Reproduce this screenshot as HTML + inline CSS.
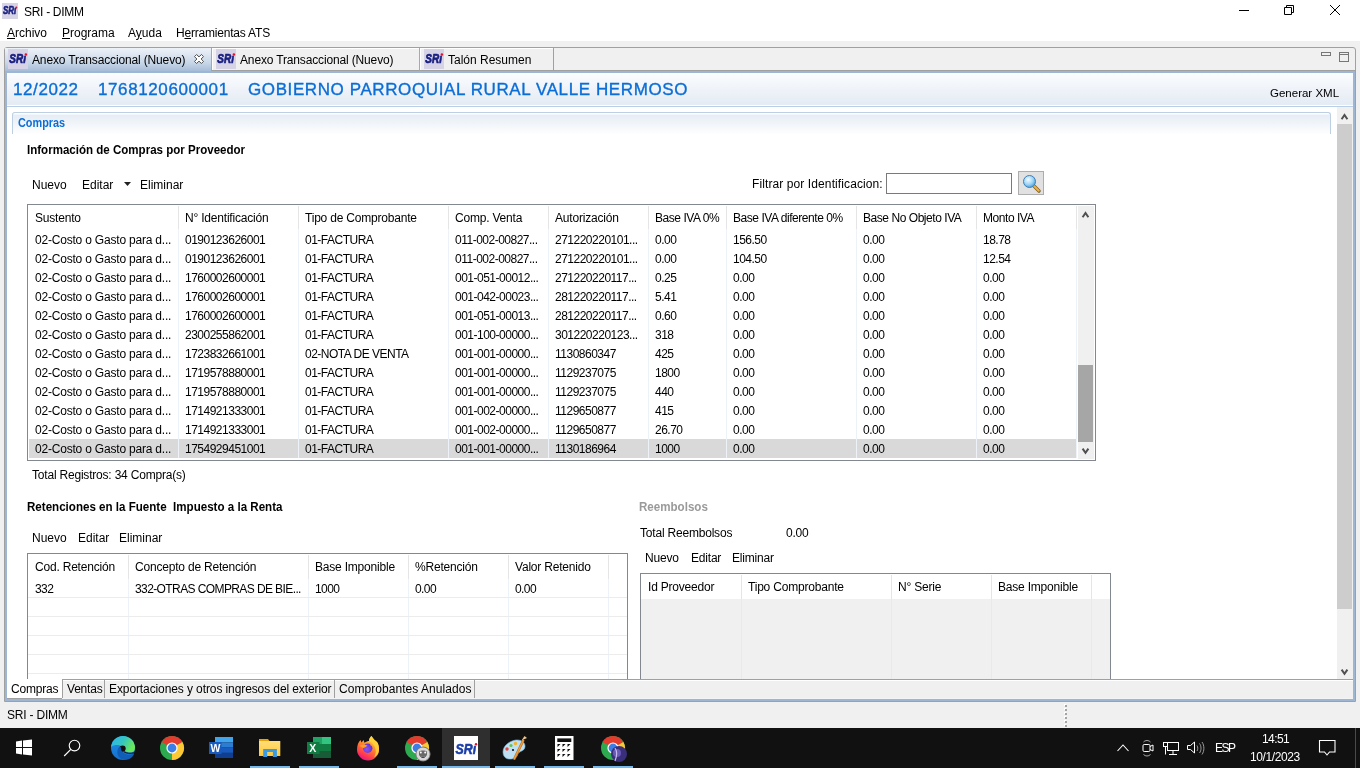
<!DOCTYPE html>
<html><head><meta charset="utf-8">
<style>
*{box-sizing:border-box;margin:0;padding:0}
html,body{width:1360px;height:768px;overflow:hidden;background:#f0f0f0;font-family:"Liberation Sans",sans-serif;font-size:12px;color:#000}
.a{position:absolute}
.t{position:absolute;white-space:nowrap;line-height:15px;font-size:12px}
.s{font-size:12px;letter-spacing:-0.2px}
.b{font-weight:bold}
</style></head><body>
<div class="a" style="left:0;top:0;width:1360px;height:768px;will-change:transform;overflow:hidden">

<div class="a" style="left:0px;top:0px;width:1360px;height:41px;background:#fff"></div>
<svg class="a" style="left:2px;top:3px" width="16" height="16" viewBox="0 0 20 20"><rect width="20" height="20" fill="#d6d3e6"/><text x="1.3" y="13.5" font-family="Liberation Sans" font-weight="bold" font-style="italic" font-size="12.6" fill="#1a2080" stroke="#1a2080" stroke-width="0.7" textLength="16.6" lengthAdjust="spacingAndGlyphs">SRı</text><circle cx="17.9" cy="5.5" r="1.25" fill="#e8102a"/></svg>
<div class="t" style="left:24px;top:5px;letter-spacing:-0.3px">SRI - DIMM</div>
<div class="t" style="left:7px;top:26px;"><u>A</u>rchivo</div>
<div class="t" style="left:62px;top:26px;"><u>P</u>rograma</div>
<div class="t" style="left:128px;top:26px;">A<u>y</u>uda</div>
<div class="t" style="left:176px;top:26px;letter-spacing:-0.2px">H<u>e</u>rramientas ATS</div>
<svg class="a" style="left:1230px;top:0" width="130" height="22"><path d="M9 10.5h10" stroke="#000" stroke-width="1"/><path d="M54.5 7.5h7v7h-7z M56.5 7.5v-2h7v7h-2" fill="none" stroke="#000" stroke-width="1"/><path d="M100 5l10 10M110 5l-10 10" stroke="#000" stroke-width="1"/></svg>
<div class="a" style="left:4px;top:47px;width:1352px;height:655px;border:1px solid #a0a0a0;border-radius:3px 3px 0 0;background:#f0f0f0"></div>
<div class="a" style="left:5px;top:48px;width:206px;height:25px;background:linear-gradient(#eef2f8,#c7d6e8 60%,#9db6d3)"></div>
<svg class="a" style="left:8px;top:49px" width="20" height="20" viewBox="0 0 20 20"><rect width="20" height="20" fill="#d6d3e6"/><text x="1.3" y="13.5" font-family="Liberation Sans" font-weight="bold" font-style="italic" font-size="12.6" fill="#1a2080" stroke="#1a2080" stroke-width="0.7" textLength="16.6" lengthAdjust="spacingAndGlyphs">SRı</text><circle cx="17.9" cy="5.5" r="1.25" fill="#e8102a"/></svg>
<div class="t" style="left:32px;top:53px;letter-spacing:-0.15px">Anexo Transaccional (Nuevo)</div>
<svg class="a" style="left:194px;top:54px" width="10" height="10" viewBox="0 0 10 10"><path d="M0.5 2.6L2.6 0.5 5 2.9 7.4 0.5 9.5 2.6 7.1 5 9.5 7.4 7.4 9.5 5 7.1 2.6 9.5 0.5 7.4 2.9 5z" fill="#fff" stroke="#4d4d4d" stroke-width="1"/></svg>
<div class="a" style="left:211px;top:48px;width:208px;height:23px;border-left:1px solid #a8a8a8;border-bottom:1px solid #a0a0a0;background:#f0f0f0;box-shadow:inset 1px 1px 0 #fff"></div>
<svg class="a" style="left:216px;top:49px" width="20" height="20" viewBox="0 0 20 20"><rect width="20" height="20" fill="#d6d3e6"/><text x="1.3" y="13.5" font-family="Liberation Sans" font-weight="bold" font-style="italic" font-size="12.6" fill="#1a2080" stroke="#1a2080" stroke-width="0.7" textLength="16.6" lengthAdjust="spacingAndGlyphs">SRı</text><circle cx="17.9" cy="5.5" r="1.25" fill="#e8102a"/></svg>
<div class="t" style="left:240px;top:53px;letter-spacing:-0.15px">Anexo Transaccional (Nuevo)</div>
<div class="a" style="left:419px;top:48px;width:135px;height:23px;border-left:1px solid #a8a8a8;border-right:1px solid #a0a0a0;border-bottom:1px solid #a0a0a0;background:#f0f0f0;box-shadow:inset 1px 1px 0 #fff"></div>
<svg class="a" style="left:424px;top:49px" width="20" height="20" viewBox="0 0 20 20"><rect width="20" height="20" fill="#d6d3e6"/><text x="1.3" y="13.5" font-family="Liberation Sans" font-weight="bold" font-style="italic" font-size="12.6" fill="#1a2080" stroke="#1a2080" stroke-width="0.7" textLength="16.6" lengthAdjust="spacingAndGlyphs">SRı</text><circle cx="17.9" cy="5.5" r="1.25" fill="#e8102a"/></svg>
<div class="t" style="left:448px;top:53px;">Talón Resumen</div>
<div class="a" style="left:554px;top:70px;width:801px;height:1px;background:#a0a0a0"></div>
<svg class="a" style="left:1318px;top:49px" width="36" height="16"><rect x="3.5" y="3.5" width="9" height="3" fill="none" stroke="#777"/><rect x="21.5" y="3.5" width="9" height="9" fill="none" stroke="#777"/><path d="M21.5 5.5h9" stroke="#777"/></svg>
<div class="a" style="left:5px;top:71px;width:1350px;height:630px;border:2px solid #9db6d3;background:#fff"></div>
<div class="a" style="left:7px;top:73px;width:1346px;height:32px;background:linear-gradient(#fbfcfe,#e4ebf4)"></div>
<div class="a" style="left:7px;top:105px;width:1346px;height:1px;background:#fff"></div>
<div class="a" style="left:7px;top:106px;width:1346px;height:1px;background:#b9cfe6"></div>
<div class="t" style="left:13px;top:80px;font-size:17px;line-height:20px;color:#0a6ed6;letter-spacing:0.6px;-webkit-text-stroke:0.35px #0a6ed6">12/2022</div>
<div class="t" style="left:98px;top:80px;font-size:17px;line-height:20px;color:#0a6ed6;letter-spacing:0.6px;-webkit-text-stroke:0.35px #0a6ed6">1768120600001</div>
<div class="t" style="left:248px;top:80px;font-size:17px;line-height:20px;color:#0a6ed6;letter-spacing:0.6px;-webkit-text-stroke:0.35px #0a6ed6">GOBIERNO PARROQUIAL RURAL VALLE HERMOSO</div>
<div class="t" style="left:1270px;top:86px;font-size:11.5px">Generar XML</div>
<div class="a" style="left:12px;top:112px;width:1319px;height:22px;border:1px solid #bccfe3;border-bottom:none;border-radius:3px 3px 0 0;background:linear-gradient(#fff 0,#fff 1px,#e6edf5 2px,#fff 22px)"></div>
<div class="t b" style="left:18px;top:116px;color:#0a6ed6;transform:scaleX(0.905);transform-origin:0 0">Compras</div>
<div class="t b" style="left:27px;top:143px;transform:scaleX(0.962);transform-origin:0 0">Información de Compras por Proveedor</div>
<div class="t" style="left:32px;top:178px;">Nuevo</div>
<div class="t" style="left:82px;top:178px;">Editar</div>
<svg class="a" style="left:124px;top:182px" width="8" height="5"><path d="M0 0h7l-3.5 4z" fill="#222"/></svg>
<div class="t" style="left:140px;top:178px;">Eliminar</div>
<div class="t" style="left:752px;top:177px;letter-spacing:0.1px">Filtrar por Identificacion:</div>
<div class="a" style="left:886px;top:173px;width:126px;height:21px;border:1px solid #7a7a7a;background:#fff"></div>
<div class="a" style="left:1018px;top:171px;width:26px;height:24px;border:1px solid #adadad;background:#e1e1e1"></div>
<svg class="a" style="left:1022px;top:174px" width="20" height="20" viewBox="0 0 20 20"><defs><radialGradient id="lg" cx="40%" cy="35%" r="65%"><stop offset="0" stop-color="#f4fbff"/><stop offset="0.6" stop-color="#9fd6f7"/><stop offset="1" stop-color="#4fa3db"/></radialGradient></defs><path d="M11.5 11.5l5.5 5.5" stroke="#7a5a20" stroke-width="3.4" stroke-linecap="round"/><path d="M11.8 11.8l5 5" stroke="#f0b040" stroke-width="2" stroke-linecap="round"/><circle cx="7.5" cy="7.5" r="6" fill="url(#lg)" stroke="#3d7fb8" stroke-width="1"/></svg>
<div class="a" style="left:27px;top:204px;width:1069px;height:257px;border:1px solid #828790;background:#fff"></div>
<div class="a" style="left:29px;top:439px;width:1047px;height:19px;background:#d9d9d9"></div>
<div class="a" style="left:178px;top:206px;width:1px;height:23px;background:#e5e5e5"></div>
<div class="a" style="left:178px;top:229px;width:1px;height:229px;background:#edf2f9"></div>
<div class="a" style="left:298px;top:206px;width:1px;height:23px;background:#e5e5e5"></div>
<div class="a" style="left:298px;top:229px;width:1px;height:229px;background:#edf2f9"></div>
<div class="a" style="left:448px;top:206px;width:1px;height:23px;background:#e5e5e5"></div>
<div class="a" style="left:448px;top:229px;width:1px;height:229px;background:#edf2f9"></div>
<div class="a" style="left:548px;top:206px;width:1px;height:23px;background:#e5e5e5"></div>
<div class="a" style="left:548px;top:229px;width:1px;height:229px;background:#edf2f9"></div>
<div class="a" style="left:648px;top:206px;width:1px;height:23px;background:#e5e5e5"></div>
<div class="a" style="left:648px;top:229px;width:1px;height:229px;background:#edf2f9"></div>
<div class="a" style="left:726px;top:206px;width:1px;height:23px;background:#e5e5e5"></div>
<div class="a" style="left:726px;top:229px;width:1px;height:229px;background:#edf2f9"></div>
<div class="a" style="left:856px;top:206px;width:1px;height:23px;background:#e5e5e5"></div>
<div class="a" style="left:856px;top:229px;width:1px;height:229px;background:#edf2f9"></div>
<div class="a" style="left:976px;top:206px;width:1px;height:23px;background:#e5e5e5"></div>
<div class="a" style="left:976px;top:229px;width:1px;height:229px;background:#edf2f9"></div>
<div class="a" style="left:1076px;top:206px;width:1px;height:23px;background:#e5e5e5"></div>
<div class="a" style="left:1076px;top:229px;width:1px;height:229px;background:#edf2f9"></div>
<div class="t s" style="left:35px;top:211px;">Sustento</div>
<div class="t s" style="left:185px;top:211px;">N° Identificación</div>
<div class="t s" style="left:305px;top:211px;">Tipo de Comprobante</div>
<div class="t s" style="left:455px;top:211px;">Comp. Venta</div>
<div class="t s" style="left:555px;top:211px;">Autorización</div>
<div class="t s" style="left:655px;top:211px;letter-spacing:-0.45px">Base IVA 0%</div>
<div class="t s" style="left:733px;top:211px;letter-spacing:-0.45px">Base IVA diferente 0%</div>
<div class="t s" style="left:863px;top:211px;letter-spacing:-0.45px">Base No Objeto IVA</div>
<div class="t s" style="left:983px;top:211px;letter-spacing:-0.45px">Monto IVA</div>
<div class="t s" style="left:35px;top:233px;">02-Costo o Gasto para d...</div>
<div class="t s" style="left:185px;top:233px;letter-spacing:-0.5px">0190123626001</div>
<div class="t s" style="left:305px;top:233px;letter-spacing:-0.5px">01-FACTURA</div>
<div class="t s" style="left:455px;top:233px;letter-spacing:-0.5px">011-002-00827...</div>
<div class="t s" style="left:555px;top:233px;letter-spacing:-0.5px">271220220101...</div>
<div class="t s" style="left:655px;top:233px;letter-spacing:-0.5px">0.00</div>
<div class="t s" style="left:733px;top:233px;letter-spacing:-0.5px">156.50</div>
<div class="t s" style="left:863px;top:233px;letter-spacing:-0.5px">0.00</div>
<div class="t s" style="left:983px;top:233px;letter-spacing:-0.5px">18.78</div>
<div class="t s" style="left:35px;top:252px;">02-Costo o Gasto para d...</div>
<div class="t s" style="left:185px;top:252px;letter-spacing:-0.5px">0190123626001</div>
<div class="t s" style="left:305px;top:252px;letter-spacing:-0.5px">01-FACTURA</div>
<div class="t s" style="left:455px;top:252px;letter-spacing:-0.5px">011-002-00827...</div>
<div class="t s" style="left:555px;top:252px;letter-spacing:-0.5px">271220220101...</div>
<div class="t s" style="left:655px;top:252px;letter-spacing:-0.5px">0.00</div>
<div class="t s" style="left:733px;top:252px;letter-spacing:-0.5px">104.50</div>
<div class="t s" style="left:863px;top:252px;letter-spacing:-0.5px">0.00</div>
<div class="t s" style="left:983px;top:252px;letter-spacing:-0.5px">12.54</div>
<div class="t s" style="left:35px;top:271px;">02-Costo o Gasto para d...</div>
<div class="t s" style="left:185px;top:271px;letter-spacing:-0.5px">1760002600001</div>
<div class="t s" style="left:305px;top:271px;letter-spacing:-0.5px">01-FACTURA</div>
<div class="t s" style="left:455px;top:271px;letter-spacing:-0.5px">001-051-00012...</div>
<div class="t s" style="left:555px;top:271px;letter-spacing:-0.5px">271220220117...</div>
<div class="t s" style="left:655px;top:271px;letter-spacing:-0.5px">0.25</div>
<div class="t s" style="left:733px;top:271px;letter-spacing:-0.5px">0.00</div>
<div class="t s" style="left:863px;top:271px;letter-spacing:-0.5px">0.00</div>
<div class="t s" style="left:983px;top:271px;letter-spacing:-0.5px">0.00</div>
<div class="t s" style="left:35px;top:290px;">02-Costo o Gasto para d...</div>
<div class="t s" style="left:185px;top:290px;letter-spacing:-0.5px">1760002600001</div>
<div class="t s" style="left:305px;top:290px;letter-spacing:-0.5px">01-FACTURA</div>
<div class="t s" style="left:455px;top:290px;letter-spacing:-0.5px">001-042-00023...</div>
<div class="t s" style="left:555px;top:290px;letter-spacing:-0.5px">281220220117...</div>
<div class="t s" style="left:655px;top:290px;letter-spacing:-0.5px">5.41</div>
<div class="t s" style="left:733px;top:290px;letter-spacing:-0.5px">0.00</div>
<div class="t s" style="left:863px;top:290px;letter-spacing:-0.5px">0.00</div>
<div class="t s" style="left:983px;top:290px;letter-spacing:-0.5px">0.00</div>
<div class="t s" style="left:35px;top:309px;">02-Costo o Gasto para d...</div>
<div class="t s" style="left:185px;top:309px;letter-spacing:-0.5px">1760002600001</div>
<div class="t s" style="left:305px;top:309px;letter-spacing:-0.5px">01-FACTURA</div>
<div class="t s" style="left:455px;top:309px;letter-spacing:-0.5px">001-051-00013...</div>
<div class="t s" style="left:555px;top:309px;letter-spacing:-0.5px">281220220117...</div>
<div class="t s" style="left:655px;top:309px;letter-spacing:-0.5px">0.60</div>
<div class="t s" style="left:733px;top:309px;letter-spacing:-0.5px">0.00</div>
<div class="t s" style="left:863px;top:309px;letter-spacing:-0.5px">0.00</div>
<div class="t s" style="left:983px;top:309px;letter-spacing:-0.5px">0.00</div>
<div class="t s" style="left:35px;top:328px;">02-Costo o Gasto para d...</div>
<div class="t s" style="left:185px;top:328px;letter-spacing:-0.5px">2300255862001</div>
<div class="t s" style="left:305px;top:328px;letter-spacing:-0.5px">01-FACTURA</div>
<div class="t s" style="left:455px;top:328px;letter-spacing:-0.5px">001-100-00000...</div>
<div class="t s" style="left:555px;top:328px;letter-spacing:-0.5px">301220220123...</div>
<div class="t s" style="left:655px;top:328px;letter-spacing:-0.5px">318</div>
<div class="t s" style="left:733px;top:328px;letter-spacing:-0.5px">0.00</div>
<div class="t s" style="left:863px;top:328px;letter-spacing:-0.5px">0.00</div>
<div class="t s" style="left:983px;top:328px;letter-spacing:-0.5px">0.00</div>
<div class="t s" style="left:35px;top:347px;">02-Costo o Gasto para d...</div>
<div class="t s" style="left:185px;top:347px;letter-spacing:-0.5px">1723832661001</div>
<div class="t s" style="left:305px;top:347px;letter-spacing:-0.5px">02-NOTA DE VENTA</div>
<div class="t s" style="left:455px;top:347px;letter-spacing:-0.5px">001-001-00000...</div>
<div class="t s" style="left:555px;top:347px;letter-spacing:-0.5px">1130860347</div>
<div class="t s" style="left:655px;top:347px;letter-spacing:-0.5px">425</div>
<div class="t s" style="left:733px;top:347px;letter-spacing:-0.5px">0.00</div>
<div class="t s" style="left:863px;top:347px;letter-spacing:-0.5px">0.00</div>
<div class="t s" style="left:983px;top:347px;letter-spacing:-0.5px">0.00</div>
<div class="t s" style="left:35px;top:366px;">02-Costo o Gasto para d...</div>
<div class="t s" style="left:185px;top:366px;letter-spacing:-0.5px">1719578880001</div>
<div class="t s" style="left:305px;top:366px;letter-spacing:-0.5px">01-FACTURA</div>
<div class="t s" style="left:455px;top:366px;letter-spacing:-0.5px">001-001-00000...</div>
<div class="t s" style="left:555px;top:366px;letter-spacing:-0.5px">1129237075</div>
<div class="t s" style="left:655px;top:366px;letter-spacing:-0.5px">1800</div>
<div class="t s" style="left:733px;top:366px;letter-spacing:-0.5px">0.00</div>
<div class="t s" style="left:863px;top:366px;letter-spacing:-0.5px">0.00</div>
<div class="t s" style="left:983px;top:366px;letter-spacing:-0.5px">0.00</div>
<div class="t s" style="left:35px;top:385px;">02-Costo o Gasto para d...</div>
<div class="t s" style="left:185px;top:385px;letter-spacing:-0.5px">1719578880001</div>
<div class="t s" style="left:305px;top:385px;letter-spacing:-0.5px">01-FACTURA</div>
<div class="t s" style="left:455px;top:385px;letter-spacing:-0.5px">001-001-00000...</div>
<div class="t s" style="left:555px;top:385px;letter-spacing:-0.5px">1129237075</div>
<div class="t s" style="left:655px;top:385px;letter-spacing:-0.5px">440</div>
<div class="t s" style="left:733px;top:385px;letter-spacing:-0.5px">0.00</div>
<div class="t s" style="left:863px;top:385px;letter-spacing:-0.5px">0.00</div>
<div class="t s" style="left:983px;top:385px;letter-spacing:-0.5px">0.00</div>
<div class="t s" style="left:35px;top:404px;">02-Costo o Gasto para d...</div>
<div class="t s" style="left:185px;top:404px;letter-spacing:-0.5px">1714921333001</div>
<div class="t s" style="left:305px;top:404px;letter-spacing:-0.5px">01-FACTURA</div>
<div class="t s" style="left:455px;top:404px;letter-spacing:-0.5px">001-002-00000...</div>
<div class="t s" style="left:555px;top:404px;letter-spacing:-0.5px">1129650877</div>
<div class="t s" style="left:655px;top:404px;letter-spacing:-0.5px">415</div>
<div class="t s" style="left:733px;top:404px;letter-spacing:-0.5px">0.00</div>
<div class="t s" style="left:863px;top:404px;letter-spacing:-0.5px">0.00</div>
<div class="t s" style="left:983px;top:404px;letter-spacing:-0.5px">0.00</div>
<div class="t s" style="left:35px;top:423px;">02-Costo o Gasto para d...</div>
<div class="t s" style="left:185px;top:423px;letter-spacing:-0.5px">1714921333001</div>
<div class="t s" style="left:305px;top:423px;letter-spacing:-0.5px">01-FACTURA</div>
<div class="t s" style="left:455px;top:423px;letter-spacing:-0.5px">001-002-00000...</div>
<div class="t s" style="left:555px;top:423px;letter-spacing:-0.5px">1129650877</div>
<div class="t s" style="left:655px;top:423px;letter-spacing:-0.5px">26.70</div>
<div class="t s" style="left:733px;top:423px;letter-spacing:-0.5px">0.00</div>
<div class="t s" style="left:863px;top:423px;letter-spacing:-0.5px">0.00</div>
<div class="t s" style="left:983px;top:423px;letter-spacing:-0.5px">0.00</div>
<div class="t s" style="left:35px;top:442px;">02-Costo o Gasto para d...</div>
<div class="t s" style="left:185px;top:442px;letter-spacing:-0.5px">1754929451001</div>
<div class="t s" style="left:305px;top:442px;letter-spacing:-0.5px">01-FACTURA</div>
<div class="t s" style="left:455px;top:442px;letter-spacing:-0.5px">001-001-00000...</div>
<div class="t s" style="left:555px;top:442px;letter-spacing:-0.5px">1130186964</div>
<div class="t s" style="left:655px;top:442px;letter-spacing:-0.5px">1000</div>
<div class="t s" style="left:733px;top:442px;letter-spacing:-0.5px">0.00</div>
<div class="t s" style="left:863px;top:442px;letter-spacing:-0.5px">0.00</div>
<div class="t s" style="left:983px;top:442px;letter-spacing:-0.5px">0.00</div>
<div class="a" style="left:1078px;top:206px;width:16px;height:253px;background:#f0f0f0"></div>
<div class="a" style="left:1078px;top:365px;width:15px;height:77px;background:#a6a6a6"></div>
<svg class="a" style="left:1080px;top:210px" width="10" height="10"><path d="M2.6 7.2L5.5 3 8.4 7.2" fill="none" stroke="#505050" stroke-width="2" stroke-linejoin="miter"/></svg>
<svg class="a" style="left:1080px;top:445px" width="10" height="10"><path d="M2.6 3.6L5.5 7.8 8.4 3.6" fill="none" stroke="#505050" stroke-width="2" stroke-linejoin="miter"/></svg>
<div class="t s" style="left:32px;top:468px;">Total Registros: 34 Compra(s)</div>
<div class="t b" style="left:27px;top:500px;transform:scaleX(0.965);transform-origin:0 0">Retenciones en la Fuente&nbsp; Impuesto a la Renta</div>
<div class="t" style="left:32px;top:531px;">Nuevo</div>
<div class="t" style="left:78px;top:531px;">Editar</div>
<div class="t" style="left:119px;top:531px;">Eliminar</div>
<div class="a" style="left:27px;top:553px;width:601px;height:130px;border:1px solid #828790;border-bottom:none;background:#fff"></div>
<div class="a" style="left:128px;top:555px;width:1px;height:24px;background:#e5e5e5"></div>
<div class="a" style="left:128px;top:579px;width:1px;height:100px;background:#edf2f9"></div>
<div class="a" style="left:308px;top:555px;width:1px;height:24px;background:#e5e5e5"></div>
<div class="a" style="left:308px;top:579px;width:1px;height:100px;background:#edf2f9"></div>
<div class="a" style="left:408px;top:555px;width:1px;height:24px;background:#e5e5e5"></div>
<div class="a" style="left:408px;top:579px;width:1px;height:100px;background:#edf2f9"></div>
<div class="a" style="left:508px;top:555px;width:1px;height:24px;background:#e5e5e5"></div>
<div class="a" style="left:508px;top:579px;width:1px;height:100px;background:#edf2f9"></div>
<div class="a" style="left:608px;top:555px;width:1px;height:24px;background:#e5e5e5"></div>
<div class="a" style="left:608px;top:579px;width:1px;height:100px;background:#edf2f9"></div>
<div class="a" style="left:28px;top:597px;width:599px;height:1px;background:#ececec"></div>
<div class="a" style="left:28px;top:616px;width:599px;height:1px;background:#ececec"></div>
<div class="a" style="left:28px;top:635px;width:599px;height:1px;background:#ececec"></div>
<div class="a" style="left:28px;top:654px;width:599px;height:1px;background:#ececec"></div>
<div class="a" style="left:28px;top:673px;width:599px;height:1px;background:#ececec"></div>
<div class="t s" style="left:35px;top:560px;">Cod. Retención</div>
<div class="t s" style="left:135px;top:560px;">Concepto de Retención</div>
<div class="t s" style="left:315px;top:560px;">Base Imponible</div>
<div class="t s" style="left:415px;top:560px;">%Retención</div>
<div class="t s" style="left:515px;top:560px;">Valor Retenido</div>
<div class="t s" style="left:35px;top:582px;letter-spacing:-0.6px">332</div>
<div class="t s" style="left:135px;top:582px;letter-spacing:-0.6px">332-OTRAS COMPRAS DE BIE...</div>
<div class="t s" style="left:315px;top:582px;letter-spacing:-0.6px">1000</div>
<div class="t s" style="left:415px;top:582px;letter-spacing:-0.6px">0.00</div>
<div class="t s" style="left:515px;top:582px;letter-spacing:-0.6px">0.00</div>
<div class="t b" style="left:639px;top:500px;color:#9a9a9a;transform:scaleX(0.965);transform-origin:0 0">Reembolsos</div>
<div class="t s" style="left:640px;top:526px;">Total Reembolsos</div>
<div class="t s" style="left:786px;top:526px;">0.00</div>
<div class="t s" style="left:645px;top:551px;">Nuevo</div>
<div class="t s" style="left:691px;top:551px;">Editar</div>
<div class="t s" style="left:732px;top:551px;">Eliminar</div>
<div class="a" style="left:640px;top:573px;width:471px;height:110px;border:1px solid #828790;border-bottom:none;background:#f0f0f0"></div>
<div class="a" style="left:641px;top:574px;width:469px;height:25px;background:#fff"></div>
<div class="a" style="left:741px;top:575px;width:1px;height:24px;background:#e5e5e5"></div>
<div class="a" style="left:741px;top:599px;width:1px;height:80px;background:#e3eaf3"></div>
<div class="a" style="left:891px;top:575px;width:1px;height:24px;background:#e5e5e5"></div>
<div class="a" style="left:891px;top:599px;width:1px;height:80px;background:#e3eaf3"></div>
<div class="a" style="left:991px;top:575px;width:1px;height:24px;background:#e5e5e5"></div>
<div class="a" style="left:991px;top:599px;width:1px;height:80px;background:#e3eaf3"></div>
<div class="a" style="left:1091px;top:575px;width:1px;height:24px;background:#e5e5e5"></div>
<div class="a" style="left:1091px;top:599px;width:1px;height:80px;background:#e3eaf3"></div>
<div class="t s" style="left:648px;top:580px;">Id Proveedor</div>
<div class="t s" style="left:748px;top:580px;">Tipo Comprobante</div>
<div class="t s" style="left:898px;top:580px;">N° Serie</div>
<div class="t s" style="left:998px;top:580px;">Base Imponible</div>
<div class="a" style="left:1337px;top:107px;width:16px;height:572px;background:#f0f0f0"></div>
<div class="a" style="left:1337px;top:124px;width:15px;height:485px;background:#cdcdcd"></div>
<svg class="a" style="left:1339px;top:111px" width="12" height="12"><path d="M2.6 8.2L5.5 4 8.4 8.2" fill="none" stroke="#505050" stroke-width="2" stroke-linejoin="miter"/></svg>
<svg class="a" style="left:1339px;top:665px" width="12" height="12"><path d="M2.6 4.6L5.5 8.8 8.4 4.6" fill="none" stroke="#505050" stroke-width="2" stroke-linejoin="miter"/></svg>
<div class="a" style="left:7px;top:679px;width:1346px;height:20px;background:#f0f0f0;border-top:1px solid #a0a0a0;box-shadow:inset 0 1px 0 #fff"></div>
<div class="a" style="left:7px;top:679px;width:56px;height:20px;background:#fff"></div>
<div class="a" style="left:7px;top:698px;width:1346px;height:1px;background:#f4f4f4"></div>
<div class="a" style="left:7px;top:698px;width:55px;height:1px;background:#a0a0a0"></div>
<div class="a" style="left:62px;top:679px;width:1px;height:19px;background:#a0a0a0"></div>
<div class="a" style="left:104px;top:679px;width:1px;height:19px;background:#a0a0a0"></div>
<div class="a" style="left:334px;top:679px;width:1px;height:19px;background:#a0a0a0"></div>
<div class="a" style="left:474px;top:679px;width:1px;height:19px;background:#a0a0a0"></div>
<div class="t s" style="left:11px;top:682px;">Compras</div>
<div class="t s" style="left:67px;top:682px;">Ventas</div>
<div class="t s" style="left:109px;top:682px;letter-spacing:-0.1px">Exportaciones y otros ingresos del exterior</div>
<div class="t s" style="left:339px;top:682px;letter-spacing:0.05px">Comprobantes Anulados</div>
<div class="t s" style="left:7px;top:708px;">SRI - DIMM</div>
<div class="a" style="left:1064px;top:704px;width:2px;height:2px;background:#fff"></div>
<div class="a" style="left:1065px;top:705px;width:2px;height:2px;background:#a4a4a4"></div>
<div class="a" style="left:1064px;top:708px;width:2px;height:2px;background:#fff"></div>
<div class="a" style="left:1065px;top:709px;width:2px;height:2px;background:#a4a4a4"></div>
<div class="a" style="left:1064px;top:712px;width:2px;height:2px;background:#fff"></div>
<div class="a" style="left:1065px;top:713px;width:2px;height:2px;background:#a4a4a4"></div>
<div class="a" style="left:1064px;top:716px;width:2px;height:2px;background:#fff"></div>
<div class="a" style="left:1065px;top:717px;width:2px;height:2px;background:#a4a4a4"></div>
<div class="a" style="left:1064px;top:720px;width:2px;height:2px;background:#fff"></div>
<div class="a" style="left:1065px;top:721px;width:2px;height:2px;background:#a4a4a4"></div>
<div class="a" style="left:1064px;top:724px;width:2px;height:2px;background:#fff"></div>
<div class="a" style="left:1065px;top:725px;width:2px;height:2px;background:#a4a4a4"></div>
<div class="a" style="left:0px;top:728px;width:1360px;height:40px;background:#111111"></div>
<div class="a" style="left:442px;top:728px;width:48px;height:40px;background:#2f2f2f"></div>
<div class="a" style="left:250px;top:766px;width:40px;height:2px;background:#76b9ed"></div>
<div class="a" style="left:299px;top:766px;width:40px;height:2px;background:#76b9ed"></div>
<div class="a" style="left:397px;top:766px;width:40px;height:2px;background:#76b9ed"></div>
<div class="a" style="left:442px;top:766px;width:48px;height:2px;background:#76b9ed"></div>
<div class="a" style="left:495px;top:766px;width:40px;height:2px;background:#76b9ed"></div>
<div class="a" style="left:544px;top:766px;width:40px;height:2px;background:#76b9ed"></div>
<div class="a" style="left:593px;top:766px;width:40px;height:2px;background:#76b9ed"></div>

<svg class="a" style="left:0;top:728px" width="660" height="40" viewBox="0 728 660 40">
 <!-- windows logo -->
 <path d="M16 741.4l6 -0.8v6.4h-6z M23 740.5l9 -1.1v7.6h-9z M16 748h6v6.4l-6 -0.8z M23 748h9v7.6l-9 -1.1z" fill="#fff"/>
 <!-- search -->
 <circle cx="74.5" cy="745.6" r="5.3" fill="none" stroke="#fff" stroke-width="1.1"/>
 <path d="M70.8 749.4l-6.6 6.6" stroke="#fff" stroke-width="1.2"/>
 <defs>
  <linearGradient id="eg1" x1="0" y1="0" x2="1" y2="0.4"><stop offset="0" stop-color="#2cb4f0"/><stop offset="0.55" stop-color="#35c6c0"/><stop offset="1" stop-color="#6ae85a"/></linearGradient>
  <linearGradient id="eg2" x1="0" y1="0" x2="0" y2="1"><stop offset="0" stop-color="#1f8fe6"/><stop offset="1" stop-color="#1570d0"/></linearGradient>
  <linearGradient id="ffg" x1="0" y1="0" x2="0" y2="1"><stop offset="0" stop-color="#ffd43a"/><stop offset="0.5" stop-color="#ff7a2a"/><stop offset="1" stop-color="#f0268a"/></linearGradient>
 </defs>
 <!-- edge -->
 <circle cx="123" cy="748" r="12" fill="url(#eg2)"/>
 <path d="M111 748 A12 12 0 0 1 135 748 C135 751 133 752.5 130 752.5 C127 752.5 124.5 751.5 124.5 749.5 C123 745.5 116 743 111 747 Z" fill="url(#eg1)"/>
 <circle cx="122.6" cy="748.6" r="3.1" fill="#111"/>
 <path d="M119.5 746.5 C115.5 751 117 758.5 124 759.6 C129 760.2 133 757.5 134.2 753.5 C131 755.2 127 755.3 124.5 753.6 C122 752 120.5 750 121 747.5 Z" fill="#0f5db4"/>
 <path d="M124 751.8 C126 753.4 130.5 753.8 134 752.8" stroke="#111" stroke-width="1" fill="none"/>
 <!-- chrome -->
 <g id="chr">
 <circle cx="172" cy="748" r="12" fill="#2da94f"/>
 <path d="M172 748 L161.6 742 A12 12 0 0 1 182.4 742 Z" fill="#e33b2e"/>
 <path d="M172 748 L182.4 742 A12 12 0 0 1 172 760 Z" fill="#fcc934"/>
 <circle cx="172" cy="748" r="5.6" fill="#fff"/>
 <circle cx="172" cy="748" r="4.4" fill="#3b7ee8"/>
 </g>
 <!-- word -->
 <rect x="215" y="737" width="18" height="5.3" fill="#41a5ee"/>
 <rect x="215" y="742.3" width="18" height="5.3" fill="#2b7cd3"/>
 <rect x="215" y="747.6" width="18" height="5.3" fill="#185abd"/>
 <rect x="215" y="752.9" width="18" height="5.1" fill="#103f91"/>
 <rect x="209" y="742" width="12.5" height="12" fill="#185abd"/>
 <text x="210.4" y="752.3" font-family="Liberation Sans" font-weight="bold" font-size="10.5" fill="#fff">W</text>
 <!-- explorer -->
 <defs><linearGradient id="fdg" x1="0" y1="0" x2="0" y2="1"><stop offset="0" stop-color="#ffdf78"/><stop offset="1" stop-color="#ffc83c"/></linearGradient></defs>
 <path d="M259 739h9l1.5 2h-10.5z" fill="#e9a20a"/>
 <rect x="259" y="741" width="21.3" height="15" fill="url(#fdg)"/>
 <path d="M263.2 757v-8.1h13.7v8.1h-4v-4.9h-5.7v4.9z" fill="#3a9be2"/>
 <!-- excel -->
 <rect x="313" y="737" width="18" height="21" fill="#21a366"/>
 <rect x="322" y="737" width="9" height="7" fill="#33c481"/>
 <rect x="313" y="744" width="18" height="7" fill="#107c41"/>
 <rect x="313" y="751" width="18" height="7" fill="#185c37"/>
 <rect x="307" y="742" width="12.5" height="12" fill="#107c41"/>
 <text x="309.3" y="752.3" font-family="Liberation Sans" font-weight="bold" font-size="10.5" fill="#fff">X</text>
 <!-- firefox -->
 <defs>
  <linearGradient id="ffb" x1="0.8" y1="0" x2="0.3" y2="1"><stop offset="0" stop-color="#ffe84a"/><stop offset="0.45" stop-color="#ff8a2a"/><stop offset="0.8" stop-color="#ff3a50"/><stop offset="1" stop-color="#e8128a"/></linearGradient>
  <radialGradient id="ffp" cx="0.4" cy="0.6" r="0.7"><stop offset="0" stop-color="#8a55f0"/><stop offset="1" stop-color="#5a2fd0"/></radialGradient>
 </defs>
 <path d="M357 749.5 C357 745 358.5 742 360.5 740 L361.5 742.5 L363.5 740 L364.5 742.8 C366 741.5 368 741 369 741 C369 739 370 737 371.5 736 C373 738.5 375 740.5 377 742 C378.5 744 379 746.5 379 749.5 A11 11 0 0 1 357 749.5 Z" fill="url(#ffb)"/>
 <path d="M369 741 C369 739 370 737 371.5 736 C373 738.5 375 740.5 377 742 C378.5 744 379 746.5 379 749.5 C379 753 377 756 374 757.5 C376 754 376.5 750 374.5 746.5 C373 744 371 742 369 741z" fill="#ffd43a" opacity="0.85"/>
 <circle cx="367.7" cy="748.2" r="4.7" fill="url(#ffp)"/>
 <path d="M359.5 745.5 C361.5 744.5 364.5 744.3 367.5 745.5 C366.5 746.5 365 747.5 363.5 748 C362 747.5 360.5 746.5 359.5 745.5z" fill="#ffa01e"/>
 <path d="M370 743.8 C371 744.5 372 745 372.5 744.6 L371 746.2z" fill="#ff9a30"/>
 <!-- chrome 2 -->
 <use href="#chr" x="245" y="0"/>
 <circle cx="423" cy="754" r="7.6" fill="#7a7a7a"/>
 <circle cx="423" cy="754" r="6.6" fill="#d8d8d8"/>
 <path d="M419 751.5c1.5-1.5 6.5-1.5 8 0v3.5c-1 2.5-7 2.5-8 0z" fill="#6a6a6a"/>
 <path d="M420.5 756.5c1 1.5 4 1.5 5 0" stroke="#444" stroke-width="1" fill="none"/>
 <circle cx="420.8" cy="752.6" r="1" fill="#fff"/><circle cx="425.2" cy="752.6" r="1" fill="#fff"/>
 <!-- SRI -->
 <rect x="454" y="736" width="24" height="24" fill="#fff"/>
 <text x="455.6" y="754.4" font-family="Liberation Sans" font-weight="bold" font-style="italic" font-size="14.8" fill="#1b3ea8" stroke="#1b3ea8" stroke-width="0.6" textLength="20.6" lengthAdjust="spacingAndGlyphs">SRı</text>
 <circle cx="476" cy="744.2" r="1.2" fill="#e8102a"/>
 <!-- paint -->
 <path d="M503 752c0-6 6-11 13-12 6-.5 9.5 3 9 7-.5 3.5-4 4-6 5.5-2 1.5-1 4-4 5.5-4 2-12 2-12-6z" fill="#bfe0f2" stroke="#7db7d8" stroke-width="0.6"/>
 <circle cx="507" cy="749" r="1.7" fill="#e8423a"/>
 <circle cx="511" cy="745.5" r="1.6" fill="#6cc04a"/>
 <circle cx="515.5" cy="743.5" r="1.7" fill="#f6b21f"/>
 <circle cx="513" cy="750" r="1.1" fill="#111"/>
 <path d="M523.5 740l-9.5 19.5" stroke="#b8701e" stroke-width="2.6"/><path d="M523.5 740l-9.5 19.5" stroke="#f0a040" stroke-width="1.4"/>
 <path d="M521.5 740.5l3-4.5 2.5 2z" fill="#e8c890"/>
 <!-- calc -->
 <rect x="555" y="736" width="18.5" height="24" fill="#fff"/>
 <rect x="557.3" y="738.4" width="14" height="3.6" fill="#111"/>
 <g fill="#111">
  <path d="M557.5 744h3l-3 3z M562.5 744h3l-3 3z M567.5 744h3l-3 3z M557.5 749h3l-3 3z M562.5 749h3l-3 3z M567.5 749h3l-3 3z M557.5 754h3l-3 3z M562.5 754h3l-3 3z M567.5 754h3l-3 3z"/>
 </g>
 <!-- chrome 3 -->
 <use href="#chr" x="441" y="0"/>
 <circle cx="619" cy="754" r="8" fill="#3a2f7a"/>
 <circle cx="617" cy="753" r="4" fill="#6a5ab8"/>
 <path d="M615 748c2 3 2 8 0 13" stroke="#c8b8f0" stroke-width="1.2" fill="none"/>
</svg>
<svg class="a" style="left:1100px;top:728px" width="260" height="40" viewBox="1100 728 260 40">
 <path d="M1117.5 751l5.5-6 5.5 6" fill="none" stroke="#fff" stroke-width="1.1"/>
 <rect x="1143" y="744.5" width="7" height="7" rx="1.2" fill="none" stroke="#fff" stroke-width="1"/>
 <path d="M1150 746.5l3 -1.5v6l-3 -1.5" fill="none" stroke="#fff" stroke-width="1"/>
 <path d="M1143.5 742c2-2 5-2 7 0 M1143.5 754.5c2 2 5 2 7 0" fill="none" stroke="#bbb" stroke-width="0.9"/>
 <rect x="1167.5" y="742.5" width="11" height="8" fill="none" stroke="#fff" stroke-width="1"/>
 <rect x="1163.5" y="742.5" width="4" height="4" fill="none" stroke="#fff" stroke-width="1"/>
 <path d="M1165.5 746.5v8 M1173 750.5v3.5 M1169 754.5h8" stroke="#fff" stroke-width="1" fill="none"/>
 <path d="M1187.5 745.5h3l4-3.5v11l-4-3.5h-3z" fill="none" stroke="#fff" stroke-width="1"/>
 <path d="M1197 745.5c1 1.5 1 4 0 5.5 M1199.5 743.5c2 2.5 2 7 0 9.5 M1202 742c2.5 3.5 2.5 9 0 12.5" fill="none" stroke="#aaa" stroke-width="0.9"/>
 <path d="M1319.5 740.5h15.5v11.5h-5.5l-2.5 3-2.5-3h-5z" fill="none" stroke="#fff" stroke-width="1.1"/>
 <rect x="1355" y="728" width="1" height="40" fill="#4a4a4a"/>
</svg>

<div class="t" style="left:1215px;top:741px;color:#fff;font-size:12px;letter-spacing:-1.5px">ESP</div>
<div class="t" style="left:1262px;top:732px;color:#fff;font-size:12px;letter-spacing:-0.6px">14:51</div>
<div class="t" style="left:1250px;top:750px;color:#fff;font-size:12px;letter-spacing:-0.4px">10/1/2023</div>
</div></body></html>
